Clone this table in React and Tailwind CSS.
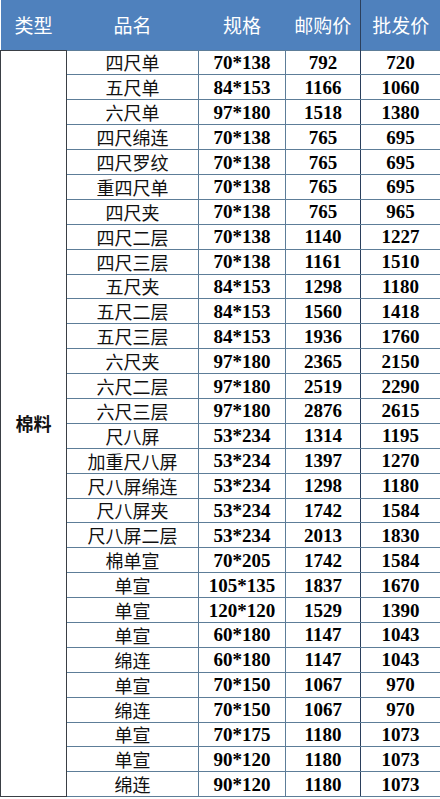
import React from 'react';

const rows = [
  ['四尺单', '70*138', '792', '720'],
  ['五尺单', '84*153', '1166', '1060'],
  ['六尺单', '97*180', '1518', '1380'],
  ['四尺绵连', '70*138', '765', '695'],
  ['四尺罗纹', '70*138', '765', '695'],
  ['重四尺单', '70*138', '765', '695'],
  ['四尺夹', '70*138', '765', '965'],
  ['四尺二层', '70*138', '1140', '1227'],
  ['四尺三层', '70*138', '1161', '1510'],
  ['五尺夹', '84*153', '1298', '1180'],
  ['五尺二层', '84*153', '1560', '1418'],
  ['五尺三层', '84*153', '1936', '1760'],
  ['六尺夹', '97*180', '2365', '2150'],
  ['六尺二层', '97*180', '2519', '2290'],
  ['六尺三层', '97*180', '2876', '2615'],
  ['尺八屏', '53*234', '1314', '1195'],
  ['加重尺八屏', '53*234', '1397', '1270'],
  ['尺八屏绵连', '53*234', '1298', '1180'],
  ['尺八屏夹', '53*234', '1742', '1584'],
  ['尺八屏二层', '53*234', '2013', '1830'],
  ['棉单宣', '70*205', '1742', '1584'],
  ['单宣', '105*135', '1837', '1670'],
  ['单宣', '120*120', '1529', '1390'],
  ['单宣', '60*180', '1147', '1043'],
  ['绵连', '60*180', '1147', '1043'],
  ['单宣', '70*150', '1067', '970'],
  ['绵连', '70*150', '1067', '970'],
  ['单宣', '70*175', '1180', '1073'],
  ['单宣', '90*120', '1180', '1073'],
  ['绵连', '90*120', '1180', '1073'],
];

const cjk = 'font-[family-name:Noto_Sans_CJK_SC,sans-serif]';
const num = 'font-[family-name:Liberation_Serif,serif] font-bold text-[19px] text-black';
const cell = 'border border-[#5d7d98] text-center p-0 leading-none';

export default function App() {
  return (
    <div className="w-[440px] h-[799px] bg-white overflow-hidden">
      <table className="w-[440px] border-collapse table-fixed">
        <colgroup>
          <col className="w-[66px]" />
          <col className="w-[132px]" />
          <col className="w-[87px]" />
          <col className="w-[75px]" />
          <col className="w-[80px]" />
        </colgroup>
        <thead>
          <tr className={`h-[50px] bg-[#4f81bd] text-white text-[19px] leading-none ${cjk}`}>
            <th className="font-normal p-0">类型</th>
            <th className="font-normal p-0">品名</th>
            <th className="font-normal p-0">规格</th>
            <th className="font-normal p-0 border-r border-[#2b3f5c]">邮购价</th>
            <th className="font-normal p-0">批发价</th>
          </tr>
        </thead>
        <tbody>
          {rows.map((r, i) => (
            <tr key={i} className="h-[24.9px]">
              {i === 0 && (
                <td
                  rowSpan={rows.length}
                  className={`border border-[#3a3f45] text-center align-middle text-[18px] font-bold text-[#111] leading-none ${cjk}`}
                >
                  棉料
                </td>
              )}
              <td className={`${cell} text-[18px] text-[#111] ${cjk} border-l-[#3a3f45]`}>{r[0]}</td>
              <td className={`${cell} ${num}`}>{r[1]}</td>
              <td className={`${cell} ${num} border-r-[#2b3f5c]`}>{r[2]}</td>
              <td className={`${cell} ${num}`}>{r[3]}</td>
            </tr>
          ))}
        </tbody>
      </table>
    </div>
  );
}
